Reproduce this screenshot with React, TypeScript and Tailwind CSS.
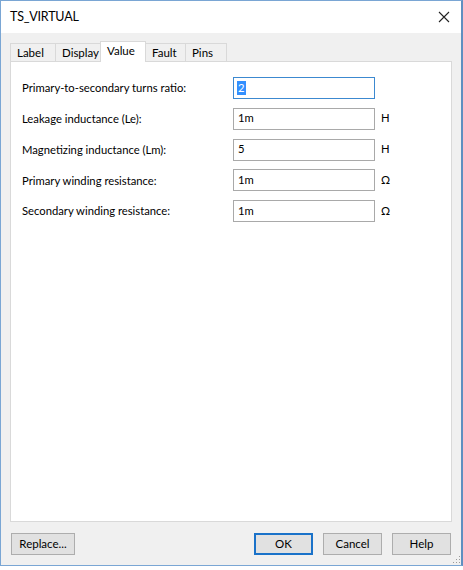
import React, { useState } from "react";

type Field = { label: string; value: string; unit?: string };

const FIELDS: Field[] = [
  { label: "Primary-to-secondary turns ratio:", value: "2" },
  { label: "Leakage inductance (Le):", value: "1m", unit: "H" },
  { label: "Magnetizing inductance (Lm):", value: "5", unit: "H" },
  { label: "Primary winding resistance:", value: "1m", unit: "Ω" },
  { label: "Secondary winding resistance:", value: "1m", unit: "Ω" },
];

const TABS = ["Label", "Display", "Value", "Fault", "Pins"];

const font = { fontFamily: 'Lato, "Noto Sans", sans-serif' };

export default function App() {
  const [tab, setTab] = useState("Value");

  return (
    <div className="w-[463px] h-[570px] bg-white" style={font}>
      <div className="w-[463px] h-[566px] flex flex-col border border-[#7aa6d4] border-r-2 border-r-[#5f8fc0] text-[#000]">
        {/* title bar */}
        <div className="h-[32px] bg-white flex items-center justify-between pl-[9px] pr-[10px] shrink-0">
          <span className="text-[12.5px] tracking-[-0.2px] text-[#000] leading-none">TS_VIRTUAL</span>
          <svg width="12" height="12" viewBox="0 0 12 12" className="mr-[1px]">
            <path d="M1 1 L11 11 M11 1 L1 11" stroke="#222" strokeWidth="1.1" />
          </svg>
        </div>

        {/* body */}
        <div className="flex-1 bg-[#f0f0f0] flex flex-col px-[9px] pt-[8px] relative">
          <div className="flex items-end h-[20px]">
            {TABS.map((t) => (
              <TabItem key={t} label={t} active={tab === t} onClick={() => setTab(t)} />
            ))}
          </div>

          <div className="w-[442px] h-[461px] bg-white border border-[#d9d9d9] pt-[15px] pl-[11px] flex flex-col gap-[8.75px]">
            {FIELDS.map((f, i) => (
              <Row key={f.label} field={f} focused={i === 0} />
            ))}
          </div>

          <div className="flex items-center mt-[11px] pl-[1px]">
            <DlgButton label="Replace..." className="w-[64px]" />
            <div className="flex-1" />
            <div className="flex gap-[10px] pr-[1px]">
              <DlgButton label="OK" primary className="w-[59px]" />
              <DlgButton label="Cancel" className="w-[59px]" />
              <DlgButton label="Help" className="w-[59px]" />
            </div>
          </div>

          <svg width="8" height="8" viewBox="0 0 8 8" className="absolute right-[0px] bottom-[1px]">
            <rect x="6" y="0" width="1" height="1" fill="#9a9a9a" />
            <rect x="3" y="3" width="1" height="1" fill="#9a9a9a" />
            <rect x="6" y="3" width="1" height="1" fill="#9a9a9a" />
            <rect x="0" y="6" width="1" height="1" fill="#9a9a9a" />
            <rect x="3" y="6" width="1" height="1" fill="#9a9a9a" />
            <rect x="6" y="6" width="1" height="1" fill="#9a9a9a" />
          </svg>
        </div>
      </div>
    </div>
  );
}

const TabItem = ({
  label,
  active,
  onClick,
}: {
  label: string;
  active?: boolean;
  onClick: () => void;
}) => {
  const widths: Record<string, string> = {
    Label: "w-[46px]",
    Display: "w-[46px]",
    Value: "w-[46px]",
    Fault: "w-[41px]",
    Pins: "w-[42px]",
  };
  return (
    <div
      onClick={onClick}
      className={`${widths[label]} flex items-center pl-[6px] text-[11.5px] cursor-pointer -mr-px border border-[#d9d9d9] border-b-0 ${
        active
          ? "h-[21px] bg-white relative z-10 -mb-px pb-[2px]"
          : "h-[18px] bg-[#f0f0f0]"
      }`}
    >
      {label}
    </div>
  );
};

const Row = ({ field, focused }: { field: Field; focused?: boolean }) => (
  <div className="flex items-center h-[22px]">
    <span className="w-[211px] text-[11.25px] leading-none">{field.label}</span>
    <div
      className={`w-[142px] h-[22px] bg-white border flex items-center px-[3px] text-[11.25px] ${
        focused ? "border-[#3c89d0]" : "border-[#a9a9a9]"
      }`}
    >
      {focused ? (
        <span className="bg-[#3390ff] text-white px-[1px] leading-[14px]">{field.value}</span>
      ) : (
        <span className="px-[1px]">{field.value}</span>
      )}
    </div>
    {field.unit && <span className="ml-[6px] text-[11.25px]">{field.unit}</span>}
  </div>
);

const DlgButton = ({
  label,
  primary,
  className,
}: {
  label: string;
  primary?: boolean;
  className?: string;
}) => (
  <button
    className={`${className} h-[22px] text-[11.5px] flex items-center justify-center bg-[#e1e1e1] ${
      primary ? "border-2 border-[#1a72c9]" : "border border-[#adadad]"
    }`}
  >
    {label}
  </button>
);
